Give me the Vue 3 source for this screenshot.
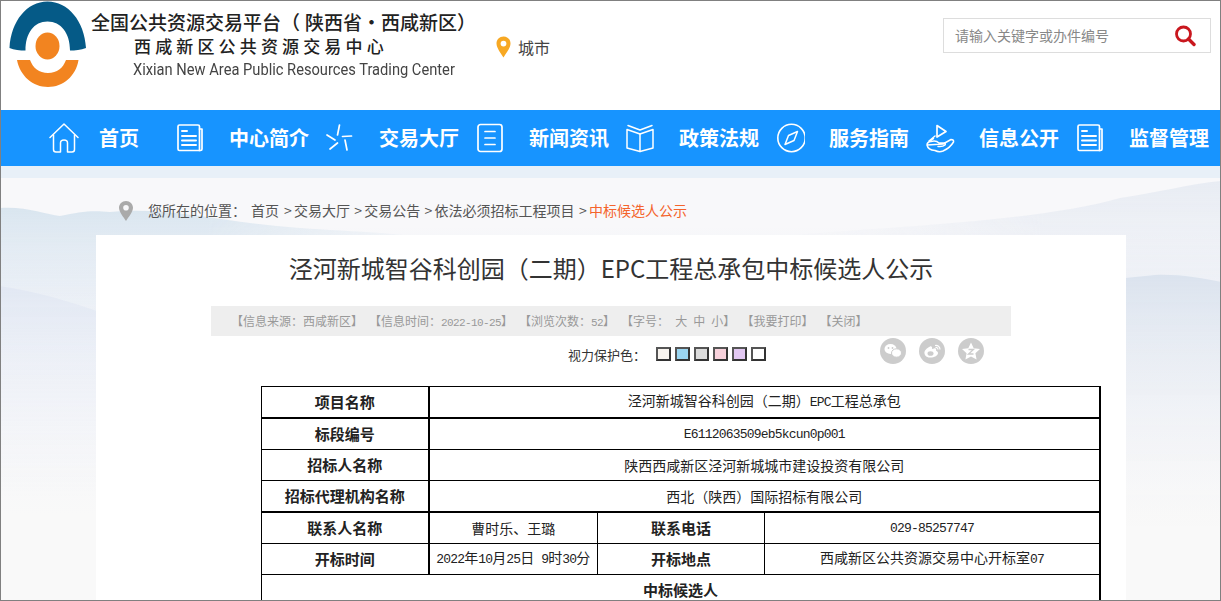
<script setup>
const navItems = [
  { label: '首页', icon: 'home' },
  { label: '中心简介', icon: 'doc' },
  { label: '交易大厅', icon: 'star' },
  { label: '新闻资讯', icon: 'list' },
  { label: '政策法规', icon: 'book' },
  { label: '服务指南', icon: 'compass' },
  { label: '信息公开', icon: 'hand' },
  { label: '监督管理', icon: 'doc' }
]
const crumbs = ['交易大厅', '交易公告', '依法必须招标工程项目']
const swatches = ['#f8f4ef', '#9bd6f2', '#dcdcdc', '#f8d2dc', '#e2c8f2', '#ffffff']
</script>

<template>
  <div class="page">
    <header class="top">
      <svg class="logo" width="78" height="87" viewBox="0 0 78 87">
        <path d="M0.500 47C2 20 18 0.500 38.500 0.500C59 0.500 75.500 20 77 47C72 49 66 49.500 61 49.500C61 32 52 20.500 38.500 20.500C25 20.500 16.500 32 16.500 49.500C11 49.500 5 49 0.500 47Z" fill="#055a87"/>
        <ellipse cx="38.500" cy="45" rx="12" ry="13.500" fill="#f28420"/>
        <path d="M8 59H21C24 67 30 72 39 72C48 72 54 67 57 59H69.500C67 75 54 86 39 86C24 86 11 75 8 59Z" fill="#f28420"/>
      </svg>
      <div class="brand">
        <div class="brand-a">全国公共资源交易平台（<span class="tail">陕西省·西咸新区）</span></div>
        <div class="brand-b">西咸新区公共资源交易中心</div>
        <div class="brand-c">Xixian New Area Public Resources Trading Center</div>
      </div>
      <div class="city">
        <svg width="15" height="22" viewBox="0 0 15 22"><path fill-rule="evenodd" d="M7.500 0.500C3.500 0.500 0.500 3.600 0.500 7.500C0.500 12 5 17.500 7.500 21.500C10 17.500 14.500 12 14.500 7.500C14.500 3.600 11.500 0.500 7.500 0.500ZM7.500 4.700A2.900 2.900 0 1 1 7.500 10.500A2.900 2.900 0 1 1 7.500 4.700Z" fill="#f7a823"/></svg>
        <span>城市</span>
      </div>
      <div class="search">
        <span class="hint">请输入关键字或办件编号</span>
        <svg width="22" height="22" viewBox="0 0 22 22" fill="none" stroke="#c9171e"><circle cx="9.500" cy="9" r="7" stroke-width="2.800"/><path d="M14.500 14L20 19.500" stroke-width="3.400" stroke-linecap="round"/></svg>
      </div>
    </header>

    <nav class="nav">
      <a v-for="item in navItems" :key="item.label" class="nav-item" :class="{ first: item.icon === 'home' }">
        <svg class="nav-icon" width="30" height="30" viewBox="0 0 30 30" fill="none" stroke="#fff" stroke-width="1.500" stroke-linejoin="round" stroke-linecap="round">
          <template v-if="item.icon === 'home'">
            <path d="M1 14.500L15 1L29 14.500"/>
            <path d="M4.500 12V26.500Q4.500 29 7 29H11.500V20Q11.500 17 15 17Q18.500 17 18.500 20V29H23Q25.500 29 25.500 26.500V12"/>
          </template>
          <template v-else-if="item.icon === 'doc'">
            <path d="M3 3.500Q3 2 4.500 2H23Q24.500 2 24.500 3.500V27.500H4.500Q3 27.500 3 26V3.500Z" stroke-width="1.700"/>
            <path d="M24.500 6H27V26Q27 27.500 25.500 27.500H24.500" stroke-width="1.700"/>
            <path d="M7 8H12M7 13H21M7 17.500H21M7 22H21" stroke-width="2"/>
          </template>
          <template v-else-if="item.icon === 'star'">
            <path d="M14.500 2L12.500 12M2 12L10 17M26.500 13L17.500 13.500M20 17L22 27M12.500 20L5 26" stroke-width="1.700"/>
          </template>
          <template v-else-if="item.icon === 'list'">
            <rect x="3" y="1.500" width="24" height="27" rx="2.500" stroke-width="1.700"/>
            <path d="M10 8.500H20M10 15H20M10 21.500H20" stroke-width="1.700"/>
          </template>
          <template v-else-if="item.icon === 'book'">
            <path d="M2 6.500L15 11L28 6.500V25L15 28.500L2 25V6.500Z"/>
            <path d="M15 11V28.500M3 2.500L15 7L27 2.500"/>
          </template>
          <template v-else-if="item.icon === 'compass'">
            <circle cx="16.500" cy="15" r="13.700" stroke-width="1.600"/>
            <path d="M22.500 8.500L13.500 12.500L10 21.500L19 17.500Z"/>
          </template>
          <template v-else>
            <path d="M12 2.500L21 8.500L12 14Z" stroke-width="1.700"/>
            <path d="M10 13L4 18L8.500 15.500M2 22Q2 19 6 18.500Q11 17 14 20H19Q21 20 20 22Q18 24 13 23.500M18 21L26 16.500Q29 16.500 28.500 19Q25 25 18 28Q14 29.500 10 27.500Q3 27 2 22Z"/>
          </template>
        </svg>
        <span class="nav-text">{{ item.label }}</span>
      </a>
    </nav>

    <main class="body">
      <svg class="scenery" width="1221" height="435" viewBox="0 0 1221 435" aria-hidden="true">
        <defs>
          <linearGradient id="ridgeA" x1="0" y1="0" x2="0" y2="1"><stop offset="0" stop-color="#d9e5ef"/><stop offset="1" stop-color="#e9eff7" stop-opacity="0"/></linearGradient>
          <linearGradient id="ridgeB" x1="0" y1="0" x2="0" y2="1"><stop offset="0" stop-color="#e2e8f3"/><stop offset="1" stop-color="#f6f7fa" stop-opacity="0"/></linearGradient>
          <linearGradient id="ridgeC" x1="0" y1="0" x2="0" y2="1"><stop offset="0" stop-color="#e8ecf3"/><stop offset="1" stop-color="#eef0f6" stop-opacity="0"/></linearGradient>
          <linearGradient id="ridgeD" x1="0" y1="0" x2="0" y2="1"><stop offset="0" stop-color="#dbe3ee"/><stop offset="1" stop-color="#f8f8f8" stop-opacity="0"/></linearGradient>
          <linearGradient id="fadeL"><stop offset="0" stop-color="#fff"/><stop offset=".45" stop-color="#fff"/><stop offset="1" stop-color="#000"/></linearGradient>
          <linearGradient id="fadeR"><stop offset="0" stop-color="#000"/><stop offset=".6" stop-color="#fff"/><stop offset="1" stop-color="#fff"/></linearGradient>
          <mask id="maskL"><rect width="460" height="435" fill="url(#fadeL)"/></mask>
          <mask id="maskR"><rect x="780" width="441" height="435" fill="url(#fadeR)"/></mask>
        </defs>
        <g mask="url(#maskL)">
          <path d="M0 42C25 40 45 48 60 50C80 46 90 44 110 46C170 40 230 58 300 62C350 66 420 66 460 80V200H0Z" fill="url(#ridgeA)"/>
          <path d="M0 120C40 126 70 136 100 146C160 165 220 170 300 190V330H0Z" fill="url(#ridgeB)"/>
        </g>
        <g mask="url(#maskR)">
          <path d="M780 70C900 60 1040 55 1120 32C1160 26 1190 18 1221 15V190H780Z" fill="url(#ridgeC)"/>
          <path d="M900 130C1000 125 1090 115 1155 109C1180 108 1200 112 1221 116V360H900Z" fill="url(#ridgeD)"/>
        </g>
      </svg>
      <div class="crumbs">
        <svg class="crumb-pin" width="14" height="20" viewBox="0 0 14 20"><path fill-rule="evenodd" d="M7 0C3 0 0 3 0 6.800C0 11 4.500 16 7 20C9.500 16 14 11 14 6.800C14 3 11 0 7 0ZM7 4A2.800 2.800 0 1 1 7 9.600A2.800 2.800 0 1 1 7 4Z" fill="#aaa"/></svg>
        <span class="here">您所在的位置：</span>
        <span class="crumb-home">首页</span>
        <span v-for="c in crumbs" :key="c" class="crumb"><i>&gt;</i>{{ c }}</span>
        <span class="crumb current"><i>&gt;</i>中标候选人公示</span>
      </div>

      <article class="card">
        <h1>泾河新城智谷科创园（二期）EPC工程总承包中标候选人公示</h1>
        <div class="info">
          <span>【信息来源：西咸新区】</span>
          <span>【信息时间：<b>2022-10-25</b>】</span>
          <span>【浏览次数：<b>52</b>】</span>
          <span>【字号： 大 中 小】</span>
          <span>【我要打印】</span>
          <span>【关闭】</span>
        </div>
        <div class="tools">
          <span class="eye">视力保护色：</span>
          <div class="swatches"><i v-for="s in swatches" :key="s" :style="{ background: s }"></i></div>
          <div class="share">
            <svg width="26" height="26" viewBox="0 0 26 26"><circle cx="13" cy="13" r="13" fill="#ccc"/><ellipse cx="10.500" cy="11" rx="6" ry="5" fill="#fff"/><ellipse cx="16.500" cy="15" rx="5" ry="4.200" fill="#fff" stroke="#ccc"/><circle cx="8.500" cy="10" r=".9" fill="#ccc"/><circle cx="12.500" cy="10" r=".9" fill="#ccc"/></svg>
            <svg width="26" height="26" viewBox="0 0 26 26"><circle cx="13" cy="13" r="13" fill="#ccc"/><path d="M11 8.500C7.500 10 5 13 5.500 15.500C6 19 10 20 13 19.500C16.500 19 19 17 19 15C19 13.500 17.500 13 17 12.500C17.500 11 17 10 15 10.500L13 11C13.500 9 12.500 8 11 8.500Z" fill="#fff"/><ellipse cx="11.500" cy="15.500" rx="3" ry="2.300" fill="#ccc"/><path d="M16 7.500A4 4 0 0 1 21 11.500M16.500 9.500A2 2 0 0 1 19 11.500" fill="none" stroke="#fff" stroke-width="1.200"/></svg>
            <svg width="26" height="26" viewBox="0 0 26 26"><circle cx="13" cy="13" r="13" fill="#ccc"/><path d="M13 4.500L15.700 10.200L22 11L17.400 15.200L18.600 21.500L13 18.400L7.400 21.500L8.600 15.200L4 11L10.300 10.200Z" fill="#fff"/><path d="M10.500 11.500H15.500L10.500 16H15.500" fill="none" stroke="#ccc" stroke-width="1.300"/></svg>
          </div>
        </div>

        <table class="grid">
          <colgroup><col class="c1"><col class="c2"><col class="c3"><col class="c4"></colgroup>
          <tbody>
            <tr><th>项目名称</th><td colspan="3">泾河新城智谷科创园（二期）<span class="lat">EPC</span>工程总承包</td></tr>
            <tr class="heavy"><th>标段编号</th><td colspan="3"><span class="lat">E6112063509eb5kcun0p001</span></td></tr>
            <tr><th>招标人名称</th><td colspan="3">陕西西咸新区泾河新城城市建设投资有限公司</td></tr>
            <tr><th>招标代理机构名称</th><td colspan="3">西北（陕西）国际招标有限公司</td></tr>
            <tr class="heavy"><th>联系人名称</th><td>曹时乐、王璐</td><th>联系电话</th><td><span class="lat">029-85257747</span></td></tr>
            <tr><th>开标时间</th><td><span class="lat">2022</span>年<span class="lat">10</span>月<span class="lat">25</span>日<span class="lat"> 9</span>时<span class="lat">30</span>分</td><th>开标地点</th><td>西咸新区公共资源交易中心开标室<span class="lat">07</span></td></tr>
            <tr><th colspan="4">中标候选人</th></tr>
          </tbody>
        </table>
      </article>
    </main>
    <div class="frame"></div>
  </div>
</template>

<style>
html, body { margin: 0; padding: 0; overflow: hidden; background: #fff; }
</style>

<style scoped>
.page { position: relative; width: 1221px; height: 601px; overflow: hidden; background: #fff; font-family: "Noto Sans CJK SC", "Noto Sans", sans-serif; color: #333; }
.frame { position: absolute; inset: 0; border: 1px solid #808080; pointer-events: none; }
.top { position: relative; height: 110px; box-sizing: border-box; display: flex; align-items: flex-start; padding: 1px 0 0 9px; }
.logo { flex: none; }
.brand { flex: none; width: 400px; margin-left: 4px; color: #222; font-weight: 500; }
.brand-a { font-size: 19px; line-height: 24px; margin-top: 9px; white-space: nowrap; }
.tail { margin-left: 5px; }
.brand-b { font-size: 17px; line-height: 24px; margin-left: 43px; letter-spacing: 4.150px; white-space: nowrap; }
.brand-c { font-family: Roboto, sans-serif; font-weight: 400; font-size: 16px; line-height: 22px; margin: 1px 0 0 42px; color: #444; white-space: nowrap; transform: scaleX(.917); transform-origin: left; }
.city { position: absolute; left: 496px; top: 36px; display: flex; align-items: center; gap: 7px; font-size: 16px; line-height: 22px; color: #444; }
.search { position: absolute; left: 943px; top: 18px; width: 268px; height: 35px; box-sizing: border-box; border: 1px solid #ddd; display: flex; align-items: center; justify-content: space-between; padding: 0 14px 0 11px; font-size: 14px; color: #888; }
.hint { line-height: 20px; margin-top: -2px; }
.nav { height: 56px; background: #1794ff; display: flex; align-items: center; padding-left: 25px; overflow: hidden; }
.nav-item { flex: none; width: 150px; display: flex; align-items: center; color: #fff; }
.nav-icon { flex: none; margin-right: 24px; }
.first .nav-icon { margin: 0 0 0 24px; }
.nav-text { width: 80px; text-align: center; font-size: 20px; font-weight: 700; line-height: 30px; white-space: nowrap; }
.body { position: relative; height: 435px; overflow: hidden; background: linear-gradient(#e8f0f8 0, #e8f0f8 12px, #f8f8fa 12px, #f8f8fa 60px, #f1f3f8 110px, #f4f5f9 230px, #f9f9f9 350px); }
.scenery { position: absolute; left: 0; top: 0; }
.crumbs { position: relative; height: 69px; box-sizing: border-box; padding: 21px 0 0 119px; display: flex; align-items: center; font-size: 14px; line-height: 22px; color: #555; white-space: nowrap; }
.crumb-pin { margin-right: 15px; }
.here, .crumb-home, .crumb { position: relative; top: -1px; }
.here { width: 103px; }
.crumb-home { margin-right: 5px; }
.crumb { margin-right: 4.300px; }
.crumb i { display: inline-block; width: 10px; font-style: normal; color: #555; }
.crumb.current { color: #f4642c; }
.card { position: relative; width: 1030px; height: 400px; margin-left: 96px; background: #fff; box-sizing: border-box; padding-top: 16px; }
h1 { margin: 0; text-align: center; font-size: 24px; font-weight: 400; line-height: 34px; color: #333; }
.info { width: 800px; height: 30px; margin: 21px 0 0 115px; padding: 0 0 2px 20px; background: #eee; display: flex; align-items: center; gap: 6px; box-sizing: border-box; font-size: 12px; color: #999; white-space: pre; word-spacing: 3.400px; }
.info b { font-family: "Liberation Mono", monospace; font-weight: 400; font-size: 11px; letter-spacing: -.6px; }
.tools { position: relative; height: 50px; }
.eye { position: absolute; left: 472px; top: 9px; font-size: 13px; line-height: 20px; color: #333; }
.swatches { position: absolute; left: 560px; top: 11px; display: flex; gap: 4px; }
.swatches i { width: 11px; height: 10px; border: 2px solid; border-color: #555 #333 #333 #555; display: block; }
.share { position: absolute; left: 784px; top: 2px; display: flex; gap: 13px; }
.grid { margin-left: 165px; width: 840px; table-layout: fixed; border-collapse: collapse; font-size: 14px; color: #222; }
.c1 { width: 167px; }
.c2 { width: 169px; }
.c3 { width: 167px; }
.grid th, .grid td { height: 29px; padding: 0 0 1px; border: 1px solid #000; text-align: center; font-weight: 400; line-height: 20px; white-space: nowrap; }
.grid th { font-weight: 700; font-size: 15px; }
.grid th:first-child { border-right-width: 2px; }
.grid tr > :last-child { border-right-width: 2px; }
.grid tr.heavy > * { border-top-width: 2px; }
.lat { font-family: "Liberation Mono", monospace; font-size: 13px; letter-spacing: -.8px; }
</style>
